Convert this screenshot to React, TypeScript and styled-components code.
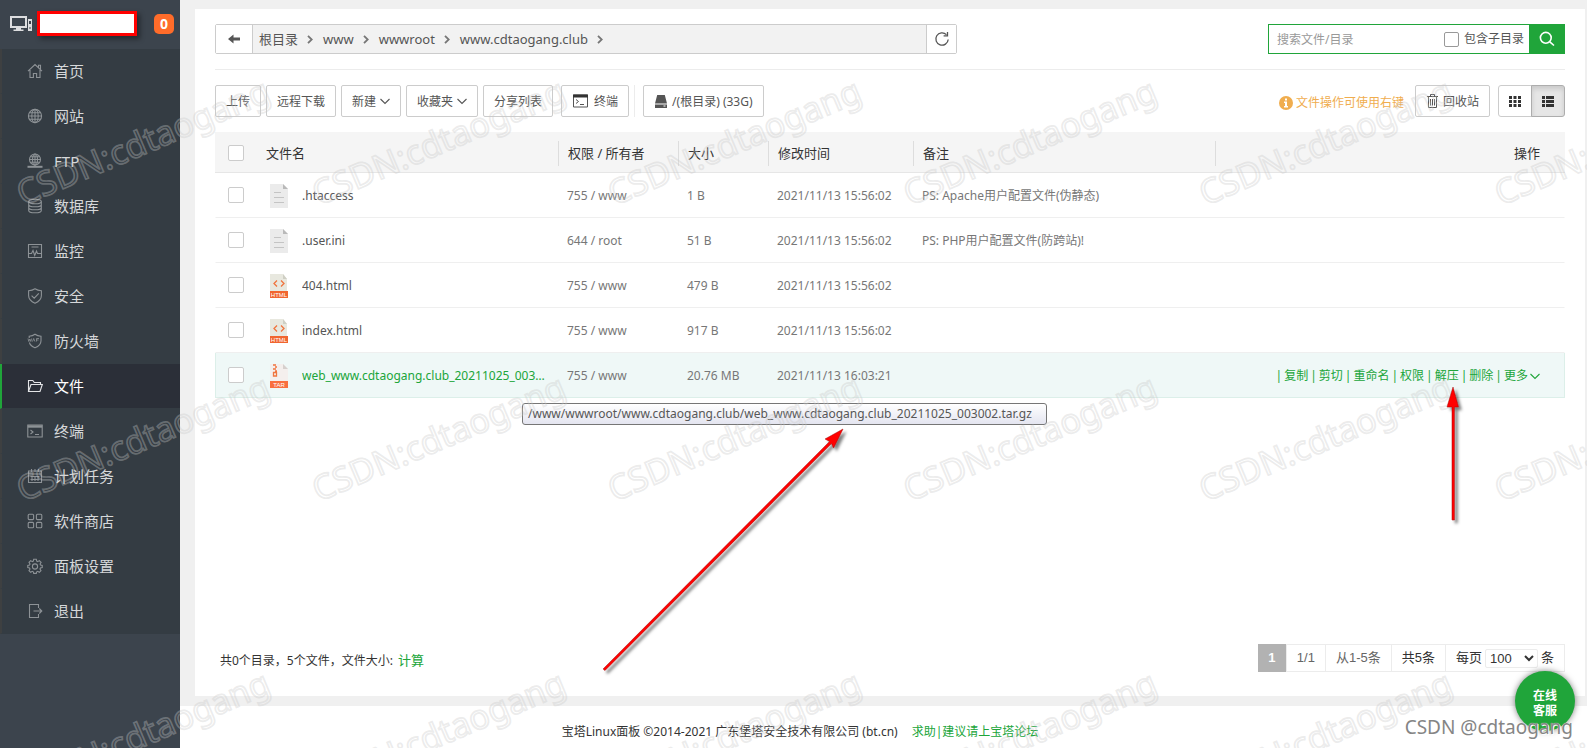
import React from 'react';
import styled, { createGlobalStyle, css } from 'styled-components';

const GREEN = '#20a53a';
const UI_FONT = '"Noto Sans", "Noto Sans CJK SC", sans-serif';

const GlobalStyle = createGlobalStyle`
  *, *::before, *::after { box-sizing: border-box; }
  body { margin: 0; background: #f0f0f0; color: #555; font: 12px/18px ${UI_FONT}; }
  button, input, select { font: inherit; color: inherit; margin: 0; }
  a { color: inherit; text-decoration: none; }
  svg { display: block; flex: none; }
`;

/* ---------- page frame ---------- */

const Page = styled.div`
  position: relative;
  display: flex;
  min-height: 100vh;
  overflow: hidden;
`;

const Sidebar = styled.aside`
  flex: none;
  width: 180px;
  background: #3c444d;
`;

const Main = styled.div`
  flex: 1;
  min-width: 0;
  display: flex;
  flex-direction: column;
`;

const Panel = styled.main`
  flex: 1;
  display: flex;
  flex-direction: column;
  margin: 9px 2px 10px 15px;
  padding: 15px 20px 24px;
  background: #fff;
`;

const Footer = styled.footer`
  display: flex;
  justify-content: center;
  gap: 14px;
  height: 42px;
  padding-right: 167px;
  background: #fff;
  color: #333;
  line-height: 52px;

  a { color: ${GREEN}; }
`;

/* ---------- sidebar ---------- */

const Host = styled.div`
  display: flex;
  align-items: center;
  height: 49px;
  padding: 0 6px 2px 10px;
`;

const HostName = styled.div`
  width: 100px;
  height: 25px;
  margin: 0 auto 0 5px;
  border: 3px solid #f00;
  background: #fff;
  box-shadow: 3px 3px 5px rgba(0, 0, 0, 0.4);
`;

const Badge = styled.span`
  width: 20px;
  height: 20px;
  border-radius: 5px;
  background: #ff6c2a;
  color: #fff;
  font-size: 14px;
  font-weight: 700;
  line-height: 20px;
  text-align: center;
`;

const Menu = styled.ul`
  margin: 0;
  padding: 0;
  list-style: none;
  background: #343c43;
`;

const MenuLink = styled.a<{ $active?: boolean }>`
  display: flex;
  align-items: center;
  gap: 11px;
  height: 45px;
  padding: 0 0 0 25px;
  border-left: 2px solid #3e4041;
  border-bottom: 1px solid #343c43;
  color: #8d9296;
  font-size: 15px;
  line-height: 24px;

  span { color: #d6d8da; }

  ${(p) =>
    p.$active &&
    css`
      border-left-color: ${GREEN};
      background: #2b2f38;
      background-clip: padding-box;
      color: #e3e4e6;
      span { color: #fff; }
    `}
`;

/* ---------- path bar ---------- */

const PathRow = styled.div`
  display: flex;
  justify-content: space-between;
  height: 46px;
  border-bottom: 1px solid #ececec;
`;

const PathBar = styled.div`
  display: flex;
  width: 742px;
  height: 30px;
  border: 1px solid #ccc;
  border-radius: 2px;
`;

const PathButton = styled.button`
  display: flex;
  align-items: center;
  justify-content: center;
  padding: 0;
  border: 0;
  background: #fff;
  color: #555;
`;

const BackButton = styled(PathButton)`
  width: 37px;
  border-right: 1px solid #ccc;
`;

const RefreshButton = styled(PathButton)`
  width: 30px;
  border-left: 1px solid #ccc;
`;

const Crumbs = styled.nav`
  flex: 1;
  display: flex;
  align-items: center;
  padding-left: 6px;
  background: #f2f2f2;
  font-size: 13px;
`;

const Crumb = styled.a`
  display: flex;
  align-items: center;
  gap: 9px;
  margin-right: 10px;
`;

const Search = styled.form`
  display: flex;
  width: 297px;
  height: 30px;
  border: 1px solid ${GREEN};
`;

const SearchInput = styled.input`
  flex: 1;
  min-width: 0;
  padding: 2px 0 0 8px;
  border: 0;
  outline: 0;
  background: #fff;
  &::placeholder { color: #999; opacity: 1; }
`;

const SearchOption = styled.label`
  display: flex;
  align-items: center;
  gap: 5px;
  padding-right: 5px;
`;

const SearchButton = styled.button`
  display: flex;
  align-items: center;
  justify-content: center;
  width: 35px;
  padding: 0;
  border: 0;
  background: ${GREEN};
  color: #fff;
`;

const Check = styled.input.attrs({ type: 'checkbox' })<{ $dark?: boolean }>`
  display: block;
  appearance: none;
  width: ${(p) => (p.$dark ? 15 : 16)}px;
  height: ${(p) => (p.$dark ? 15 : 16)}px;
  border: 1px solid ${(p) => (p.$dark ? '#999' : '#ccc')};
  border-radius: 2px;
  background: #fff;
`;

/* ---------- toolbar ---------- */

const Toolbar = styled.div`
  display: flex;
  gap: 5px;
  margin: 15px 0;
`;

const ToolButton = styled.button`
  display: flex;
  align-items: center;
  height: 32px;
  padding: 2px 10px 0;
  border: 1px solid #ccc;
  border-radius: 2px;
  background: #fff;
  white-space: nowrap;
  gap: 4px;

  svg { margin-bottom: 2px; }
`;

const ToolGroup = styled.div`
  display: flex;
  padding: 0 5px 0 3px;
  border-right: 1px solid #ececec;
  margin-right: 3px;
`;

const Hint = styled.span`
  display: flex;
  align-items: center;
  gap: 3px;
  margin: 3px 6px 0 auto;
  color: #f0ad4e;
`;

const ViewSwitch = styled.div`
  display: flex;
  margin-left: 3px;
`;

const ViewButton = styled.button<{ $on?: boolean }>`
  display: flex;
  align-items: center;
  justify-content: center;
  width: 34px;
  height: 32px;
  padding: 0;
  border: 1px solid ${(p) => (p.$on ? '#adadad' : '#ccc')};
  border-radius: ${(p) => (p.$on ? '0 3px 3px 0' : '3px 0 0 3px')};
  margin-left: ${(p) => (p.$on ? '-1px' : '0')};
  background: ${(p) => (p.$on ? '#e6e6e6' : '#fff')};
  box-shadow: ${(p) => (p.$on ? 'inset 0 3px 5px rgba(0, 0, 0, 0.125)' : 'none')};
  color: #333;
`;

/* ---------- file table ---------- */

const Table = styled.table`
  width: 100%;
  table-layout: fixed;
  border-collapse: separate;
  border-spacing: 0;
  text-align: left;
`;

const Col = styled.col<{ $width: number }>`
  width: ${(p) => p.$width}px;
`;

const HeadCell = styled.th<{ $split?: boolean; $right?: boolean; $indent?: number }>`
  height: 41px;
  padding: 2px ${(p) => (p.$right ? 25 : 0)}px 0 ${(p) => p.$indent ?? 0}px;
  border-bottom: 1px solid #e6e6e6;
  background: #f5f5f5;
  color: #333;
  font-size: 13px;
  font-weight: 400;
  text-align: ${(p) => (p.$right ? 'right' : 'left')};

  ${(p) =>
    p.$split &&
    css`
      background: linear-gradient(#ddd, #ddd) 0 9px / 1px 25px no-repeat #f5f5f5;
      padding-left: 10px;
    `}
`;

const Row = styled.tr<{ $active?: boolean }>`
  td {
    height: 45px;
    padding: 2px 0 0 9px;
    border-bottom: 1px solid ${(p) => (p.$active ? '#dcefe9' : '#efefef')};
    background: ${(p) => (p.$active ? '#eff8f7' : '#fff')};
    color: #777;
    white-space: nowrap;
  }
  td:first-child {
    padding: 0 0 0 12px;
    border-left: 1px solid ${(p) => (p.$active ? '#dcefe9' : '#fff')};
  }
  td:last-child {
    padding-right: 24px;
    border-right: 1px solid ${(p) => (p.$active ? '#dcefe9' : '#fff')};
  }
`;

const FileName = styled.a<{ $active?: boolean }>`
  display: flex;
  align-items: center;
  gap: 14px;
  padding-left: 6px;
  color: ${(p) => (p.$active ? GREEN : '#555')};

  span {
    width: 246px;
    overflow: hidden;
    text-overflow: ellipsis;
  }
`;

const Actions = styled.div`
  display: flex;
  align-items: center;
  justify-content: flex-end;
  color: ${GREEN};
  gap: 2px;

  a { display: flex; align-items: center; gap: 2px; }
`;

/* ---------- table footer ---------- */

const Bottom = styled.div`
  display: flex;
  align-items: center;
  justify-content: space-between;
  margin-top: auto;
`;

const Summary = styled.div`
  display: flex;
  align-items: baseline;
  gap: 5px;
  padding: 4px 0 0 5px;
  color: #333;

  a { color: ${GREEN}; font-size: 13px; }
`;

const Pager = styled.div`
  display: flex;
  height: 28px;
  border: 1px solid #ececec;
  color: #333;
  font: 13px/26px "Liberation Sans", "Noto Sans CJK SC", sans-serif;
`;

const PageCurrent = styled.span`
  width: 28px;
  margin: -1px 0 -1px -1px;
  background: #b2b2b2;
  color: #fff;
  font-weight: 700;
  line-height: 28px;
  text-align: center;
`;

const PageCell = styled.span<{ $soft?: boolean }>`
  display: flex;
  align-items: center;
  gap: 3px;
  padding: 0 10px;
  border-left: 1px solid #ececec;
  color: ${(p) => (p.$soft ? '#666' : '#333')};
`;

const SizeSelect = styled.select`
  width: 53px;
  height: 19px;
  padding: 0;
  border: 1px solid #ececec;
  border-radius: 2px;
  background: #fff;
`;

/* ---------- floating layers ---------- */

const Tooltip = styled.div`
  position: absolute;
  left: 522px;
  top: 403px;
  min-width: 525px;
  height: 22px;
  padding: 0 5px;
  border: 1px solid #767676;
  border-radius: 3px;
  background: linear-gradient(#fff, #e4e5f0);
  color: #575757;
  font-size: 12px;
  line-height: 20px;
  white-space: nowrap;
`;

const Support = styled.button`
  position: absolute;
  right: 12px;
  bottom: 17px;
  width: 60px;
  height: 60px;
  padding: 4px 16px 0;
  border: 0;
  border-radius: 50%;
  background: ${GREEN};
  box-shadow: 0 0 6px rgba(0, 0, 0, 0.5);
  color: #fff;
  font-weight: 700;
  line-height: 15px;
`;

const Overlay = styled.svg`
  position: absolute;
  inset: 0;
  width: 100%;
  height: 100%;
  pointer-events: none;
`;

const Signature = styled.div`
  position: absolute;
  right: 14px;
  bottom: 8px;
  color: #858585;
  font-size: 19px;
  line-height: 26px;
  text-shadow: 1px 1px 0 #fff, 0 0 1px #fff;
  pointer-events: none;
`;

/* ---------- icons ---------- */

type IconName =
  | 'home' | 'site' | 'ftp' | 'db' | 'monitor' | 'safe' | 'waf' | 'folder'
  | 'term' | 'cron' | 'apps' | 'gear' | 'exit';

const glyphs: Record<IconName, React.ReactNode> = {
  home: <path d="M1 8.2 8 1.5l7 6.7M11.5 4.5V2.3h2v4M3 7v7.5h3.4v-4h3.2v4H13V7" />,
  site: (
    <>
      <circle cx="8" cy="8" r="6.6" />
      <ellipse cx="8" cy="8" rx="3.2" ry="6.6" />
      <path d="M8 1.4v13.2M1.4 8h13.2M2.4 4.7h11.2M2.4 11.3h11.2" />
    </>
  ),
  ftp: (
    <>
      <circle cx="8" cy="6.5" r="5.5" />
      <ellipse cx="8" cy="6.5" rx="2.5" ry="5.5" />
      <path d="M8 1v12M2.5 6.5h11M3.5 3.8h9M3.5 9.2h9" />
      <path d="M0.5 13.8h15" strokeWidth="2" />
    </>
  ),
  db: (
    <>
      <ellipse cx="8" cy="3.5" rx="6.3" ry="2.3" />
      <path d="M1.7 3.5v9c0 1.3 2.8 2.3 6.3 2.3s6.3-1 6.3-2.3v-9M1.7 6.5c0 1.3 2.8 2.3 6.3 2.3s6.3-1 6.3-2.3M1.7 9.5c0 1.3 2.8 2.3 6.3 2.3s6.3-1 6.3-2.3" />
    </>
  ),
  monitor: <path d="M1.5 1.5h13v13h-13zM4.5 4h7M1.5 10.5h3L6 7.5l1.7 5 1.8-4.5 1 2.5h4" />,
  safe: <path d="M8 .8c2 1.3 4 1.8 6.4 2v4.6c0 3.6-2.4 6-6.4 7.8-4-1.8-6.4-4.2-6.4-7.8V2.8C4 2.6 6 2.1 8 .8zM4.6 7.6l2.6 2.6 4.6-4.8" />,
  waf: (
    <>
      <path d="M2.2 5V3.2C4.5 3 6.3 2.4 8 1.2c1.7 1.2 3.5 1.8 6 2v4.5c0 3.4-2.2 5.5-6 7.1-3-1.3-5-3-5.6-5.3" />
      <path d="M1 5.5l.8 3 1-2.5 1 2.5.8-3M5.5 8.5l1.2-3 1.2 3M9.5 8.5v-3H12M9.5 7h2" strokeWidth=".8" />
    </>
  ),
  folder: <path d="M1.5 13.5v-11h4.3l1.5 2h6.2v2M1.5 13.5 4 6.5h11.3L13 13.5z" />,
  term: (
    <>
      <path d="M.8 2h14.4v12H.8z" />
      <path d="M.8 3.5h14.4" strokeWidth="2.4" />
      <path d="M3.5 7l2.5 2-2.5 2M8 11.5h4" />
    </>
  ),
  cron: <path d="M1.5 3h13v11.5h-13zM1.5 6h13M4.5 1v3M8 1v3M11.5 1v3M3.5 8.5h9M3.5 11.5h9M5 8v5M8 8v5M11 8v5" />,
  apps: (
    <>
      <rect x="1.2" y="1.2" width="5.4" height="5.4" rx="1" />
      <rect x="9.4" y="1.2" width="5.4" height="5.4" rx="1" />
      <rect x="1.2" y="9.4" width="5.4" height="5.4" rx="1" />
      <rect x="9.4" y="9.4" width="5.4" height="5.4" rx="1" />
    </>
  ),
  gear: (
    <>
      <path d="M6.7 1.3h2.6l.4 1.8 1 .5 1.6-1 1.8 1.8-1 1.6.5 1 1.6.4v2.1l-1.7.5-.5 1 1 1.6-1.7 1.7-1.6-1-1 .5-.4 1.6H6.7l-.4-1.6-1-.5-1.6 1L2 12.6l1-1.6-.5-1-1.7-.5V7.4L2.5 7 3 6l-1-1.6 1.7-1.8 1.6 1 1-.5z" />
      <circle cx="8" cy="8.5" r="2.6" />
    </>
  ),
  exit: <path d="M11.5 5V1.5h-9v13h9V11M6.5 8h8.3M12.3 5.5 14.8 8l-2.5 2.5" />,
};

const Icon = ({ name }: { name: IconName }) => (
  <svg width="16" height="16" viewBox="0 0 16 16" fill="none" stroke="currentColor" strokeWidth="1.1">
    {glyphs[name]}
  </svg>
);

const HostIcon = () => (
  <svg width="22" height="17" viewBox="0 0 22 17" fill="#dcdddf">
    <path fillRule="evenodd" d="M0 1h17v12H0zM2 3v8h13V3z" />
    <path d="M6 13h5v1.5h2.5V16h-10v-1.5H6zM18 4h4v12h-4z" />
    <path d="M19 6h2v3h-2zM19.5 12h1v2h-1z" fill="#3c444d" />
  </svg>
);

const ChevronDown = () => (
  <svg width="10" height="7" viewBox="0 0 10 7" fill="none" stroke="currentColor" strokeWidth="1.1">
    <path d="M.5 1 5 5.5 9.5 1" />
  </svg>
);

const ChevronRight = () => (
  <svg width="6" height="9" viewBox="0 0 6 9" fill="none" stroke="#777" strokeWidth="1.8">
    <path d="M1 .8 4.7 4.5 1 8.2" />
  </svg>
);

const TextFileIcon = () => (
  <svg width="18" height="24" viewBox="0 0 18 24">
    <path d="M0 0h13l5 5v19H0z" fill="#ebebeb" />
    <path d="M13 0l5 5h-5z" fill="#b9b9b9" />
    <path d="M4 8.5h7M4 13.5h10M4 18.5h10" stroke="#c4c4c4" />
  </svg>
);

const HtmlFileIcon = () => (
  <svg width="18" height="24" viewBox="0 0 18 24">
    <path d="M0 0h13l4 5v13H0z" fill="#e8e8df" />
    <path d="M13 0l4 5h-4z" fill="#cfcfc4" />
    <path d="M7 6.5 4 9.5l3 3M11 6.5l3 3-3 3" fill="none" stroke="#f0743e" strokeWidth="1.3" />
    <path d="M0 17h18v7H0z" fill="#f1652f" />
    <text x="9" y="23" fontSize="6" textAnchor="middle" fill="#fff" fontFamily="Liberation Sans">HTML</text>
  </svg>
);

const TarFileIcon = () => (
  <svg width="18" height="24" viewBox="1 0 18 24">
    <path d="M1 0h13l5 5v13H1z" fill="#f4efed" />
    <path d="M14 0l5 5h-5z" fill="#d6d0cd" />
    <path d="M4 1h3M6 3h2M4 5h3M6 7h2M4.5 8.5h3v3.5h-3z" fill="none" stroke="#f0743e" strokeWidth="1.3" />
    <path d="M0 17h19v7H0z" fill="#f96f3f" />
    <text x="10" y="23" fontSize="6" textAnchor="middle" fill="#fff" fontFamily="Liberation Sans">TAR</text>
  </svg>
);

/* ---------- data ---------- */

const menu: { icon: IconName; label: string; active?: boolean }[] = [
  { icon: 'home', label: '首页' },
  { icon: 'site', label: '网站' },
  { icon: 'ftp', label: 'FTP' },
  { icon: 'db', label: '数据库' },
  { icon: 'monitor', label: '监控' },
  { icon: 'safe', label: '安全' },
  { icon: 'waf', label: '防火墙' },
  { icon: 'folder', label: '文件', active: true },
  { icon: 'term', label: '终端' },
  { icon: 'cron', label: '计划任务' },
  { icon: 'apps', label: '软件商店' },
  { icon: 'gear', label: '面板设置' },
  { icon: 'exit', label: '退出' },
];

const crumbs = ['根目录', 'www', 'wwwroot', 'www.cdtaogang.club'];

const files = [
  { name: '.htaccess', Type: TextFileIcon, perm: '755 / www', size: '1 B', time: '2021/11/13 15:56:02', note: 'PS: Apache用户配置文件(伪静态)' },
  { name: '.user.ini', Type: TextFileIcon, perm: '644 / root', size: '51 B', time: '2021/11/13 15:56:02', note: 'PS: PHP用户配置文件(防跨站)!' },
  { name: '404.html', Type: HtmlFileIcon, perm: '755 / www', size: '479 B', time: '2021/11/13 15:56:02', note: '' },
  { name: 'index.html', Type: HtmlFileIcon, perm: '755 / www', size: '917 B', time: '2021/11/13 15:56:02', note: '' },
  { name: 'web_www.cdtaogang.club_20211025_003002.tar.gz', Type: TarFileIcon, perm: '755 / www', size: '20.76 MB', time: '2021/11/13 16:03:21', note: '', active: true },
];

const actions = ['复制', '剪切', '重命名', '权限', '解压', '删除', '更多'];

const markColumns = [0, 1, 2, 3, 4, 5];
const markRows = [0, 1, 2];

export default function App() {
  return (
    <>
      <GlobalStyle />
      <Page>
        <Sidebar>
          <Host>
            <HostIcon />
            <HostName />
            <Badge>0</Badge>
          </Host>
          <Menu>
            {menu.map((m) => (
              <li key={m.label}>
                <MenuLink href="#" $active={m.active}>
                  <Icon name={m.icon} />
                  <span>{m.label}</span>
                </MenuLink>
              </li>
            ))}
          </Menu>
        </Sidebar>

        <Main>
          <Panel>
            <PathRow>
              <PathBar>
                <BackButton aria-label="返回">
                  <svg width="12" height="10" viewBox="0 0 12 10" fill="currentColor">
                    <path d="M0 5l5.5-4.5V3.5H12v3H5.5v3z" />
                  </svg>
                </BackButton>
                <Crumbs>
                  {crumbs.map((c) => (
                    <Crumb href="#" key={c}>
                      {c}
                      <ChevronRight />
                    </Crumb>
                  ))}
                </Crumbs>
                <RefreshButton aria-label="刷新">
                  <svg width="16" height="16" viewBox="0 0 16 16" fill="none" stroke="currentColor" strokeWidth="1.3">
                    <path d="M14.2 8.5A6.2 6.2 0 1 1 12.4 3.6M13.5 1v3.8H9.6" />
                  </svg>
                </RefreshButton>
              </PathBar>
              <Search>
                <SearchInput placeholder="搜索文件/目录" aria-label="搜索文件/目录" />
                <SearchOption>
                  <Check $dark />
                  包含子目录
                </SearchOption>
                <SearchButton type="button" aria-label="搜索">
                  <svg width="16" height="16" viewBox="0 0 16 16" fill="none" stroke="currentColor" strokeWidth="1.6">
                    <circle cx="6.8" cy="6.8" r="5.4" />
                    <path d="M10.8 10.8 15 14.5" />
                  </svg>
                </SearchButton>
              </Search>
            </PathRow>

            <Toolbar>
              <ToolButton>上传</ToolButton>
              <ToolButton>远程下载</ToolButton>
              <ToolButton>新建<ChevronDown /></ToolButton>
              <ToolButton>收藏夹<ChevronDown /></ToolButton>
              <ToolButton>分享列表</ToolButton>
              <ToolGroup>
                <ToolButton>
                  <svg width="18" height="14" viewBox="0 0 18 14" fill="none" stroke="#555">
                    <path d="M1.5 1h14v12h-14z" strokeWidth="1" />
                    <path d="M1 2h15" stroke="#333" strokeWidth="3" />
                    <path d="M4 5.5 6.5 7.5 4 9.5M8 10.5h4" />
                  </svg>
                  终端
                </ToolButton>
              </ToolGroup>
              <ToolButton>
                <svg width="14" height="13" viewBox="0 0 14 13" fill="#555">
                  <path d="M3.2 0h7.6L13 8.5H1zM1 9.5h12V13H1z" />
                  <path d="M9.5 11h2" stroke="#fff" />
                </svg>
                /(根目录) (33G)
              </ToolButton>
              <Hint>
                <svg width="14" height="14" viewBox="0 0 14 14">
                  <circle cx="7" cy="7" r="7" fill="#f0ad4e" />
                  <path d="M6 2.5h2v2H6zM5 5.5h3v4.5h1v1.5H5V10h1V7H5z" fill="#fff" />
                </svg>
                文件操作可使用右键
              </Hint>
              <ToolButton>
                <svg width="13" height="14" viewBox="0 0 13 14" fill="none" stroke="currentColor">
                  <path d="M1 2.5h11M4.5 2.5v-2h4v2M2.5 2.5v11h8v-11M4.5 5v6.5M6.5 5v6.5M8.5 5v6.5" />
                </svg>
                回收站
              </ToolButton>
              <ViewSwitch>
                <ViewButton aria-label="图标视图">
                  <svg width="12" height="11" viewBox="0 0 12 11" fill="currentColor">
                    <path d="M0 0h3v3H0zM4.5 0h3v3h-3zM9 0h3v3H9zM0 4h3v3H0zM4.5 4h3v3h-3zM9 4h3v3H9zM0 8h3v3H0zM4.5 8h3v3h-3zM9 8h3v3H9z" />
                  </svg>
                </ViewButton>
                <ViewButton $on aria-label="列表视图">
                  <svg width="12" height="11" viewBox="0 0 12 11" fill="currentColor">
                    <path d="M0 0h3v3H0zM4 0h8v3H4zM0 4h3v3H0zM4 4h8v3H4zM0 8h3v3H0zM4 8h8v3H4z" />
                  </svg>
                </ViewButton>
              </ViewSwitch>
            </Toolbar>

            <Table>
              <colgroup>
                <Col $width={40} />
                <Col $width={303} />
                <Col $width={120} />
                <Col $width={90} />
                <Col $width={145} />
                <col />
                <Col $width={350} />
              </colgroup>
              <thead>
                <tr>
                  <HeadCell $indent={13}><Check aria-label="全选" /></HeadCell>
                  <HeadCell $indent={11}>文件名</HeadCell>
                  <HeadCell $split>权限 / 所有者</HeadCell>
                  <HeadCell $split>大小</HeadCell>
                  <HeadCell $split>修改时间</HeadCell>
                  <HeadCell $split>备注</HeadCell>
                  <HeadCell $split $right>操作</HeadCell>
                </tr>
              </thead>
              <tbody>
                {files.map(({ name, Type, perm, size, time, note, active }) => (
                  <Row key={name} $active={active}>
                    <td><Check aria-label={name} /></td>
                    <td>
                      <FileName href="#" $active={active}>
                        <Type />
                        <span>{name}</span>
                      </FileName>
                    </td>
                    <td>{perm}</td>
                    <td>{size}</td>
                    <td>{time}</td>
                    <td>{note}</td>
                    <td>
                      {active && (
                        <Actions>
                          {actions.map((a) => (
                            <React.Fragment key={a}>
                              <span>|</span>
                              <a href="#">
                                {a}
                                {a === '更多' && <ChevronDown />}
                              </a>
                            </React.Fragment>
                          ))}
                        </Actions>
                      )}
                    </td>
                  </Row>
                ))}
              </tbody>
            </Table>

            <Bottom>
              <Summary>
                共0个目录，5个文件，文件大小: <a href="#">计算</a>
              </Summary>
              <Pager>
                <PageCurrent>1</PageCurrent>
                <PageCell $soft>1/1</PageCell>
                <PageCell $soft>从1-5条</PageCell>
                <PageCell>共5条</PageCell>
                <PageCell as="label">
                  每页
                  <SizeSelect defaultValue="100">
                    <option>100</option>
                    <option>200</option>
                    <option>500</option>
                  </SizeSelect>
                  条
                </PageCell>
              </Pager>
            </Bottom>
          </Panel>
          <Footer>
            <span>宝塔Linux面板 ©2014-2021 广东堡塔安全技术有限公司 (bt.cn)</span>
            <a href="#">求助|建议请上宝塔论坛</a>
          </Footer>
        </Main>

        <Tooltip role="tooltip">
          /www/wwwroot/www.cdtaogang.club/web_www.cdtaogang.club_20211025_003002.tar.gz
        </Tooltip>
        <Support>在线客服</Support>

        <Overlay aria-hidden="true">
          <defs>
            <filter id="drop" x="-20%" y="-20%" width="150%" height="150%" filterUnits="objectBoundingBox">
              <feDropShadow dx="3" dy="3" stdDeviation="1.8" floodOpacity="0.5" />
            </filter>
          </defs>
          <g fill="none" stroke="rgba(200,200,200,0.36)" strokeWidth="1.7" fontSize="34" fontFamily="Noto Sans">
            {markRows.map((r) =>
              markColumns.map((c) => (
                <text key={`${r}-${c}`} transform={`translate(${23 + c * 295.6} ${206 + r * 296}) rotate(-23)`}>
                  CSDN:cdtaogang
                </text>
              )),
            )}
          </g>
          <g filter="url(#drop)" fill="#f00" stroke="#a01010" strokeWidth="0.5">
            <path d="M603 669 829.5 441.5 825 439 843 429 833.5 448 831.5 443.5 605 670.5z" />
            <path d="M1452 520V407h-5l6-20 5.5 20H1454.5V520z" />
          </g>
        </Overlay>
        <Signature>CSDN @cdtaogang</Signature>
      </Page>
    </>
  );
}
